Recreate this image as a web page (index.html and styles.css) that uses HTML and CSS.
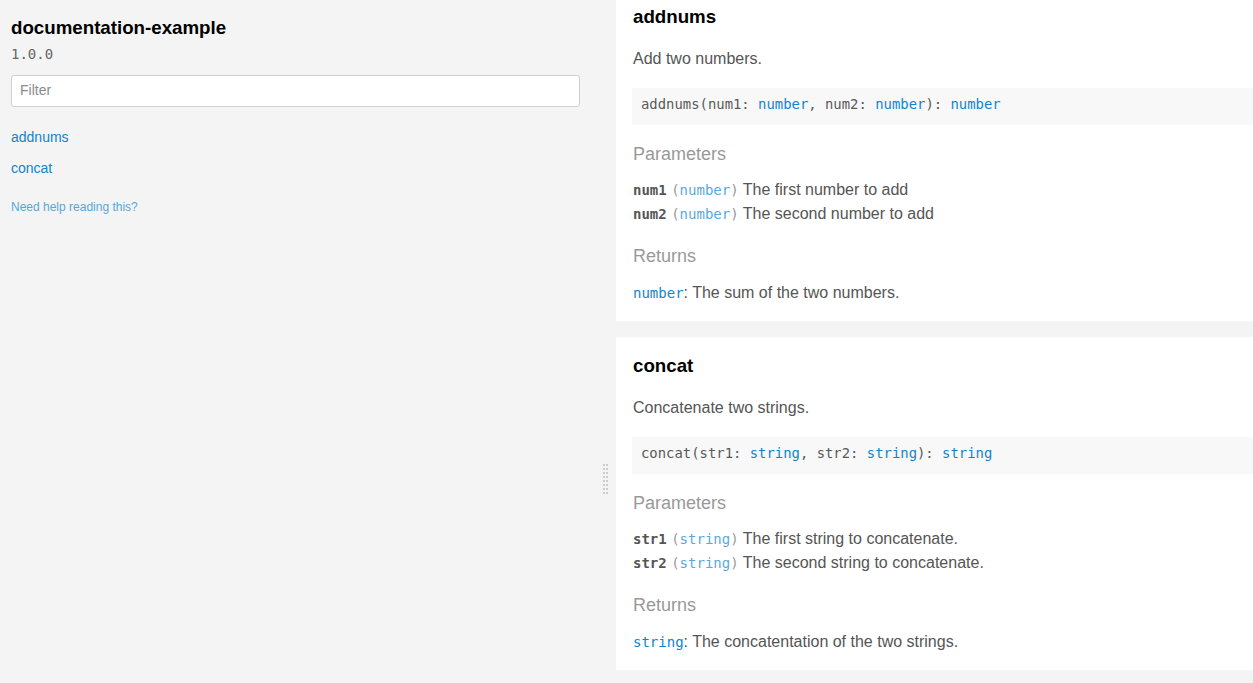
FILE: index.html
```html
<!DOCTYPE html>
<html>
<head>
<meta charset="utf-8">
<title>documentation-example 1.0.0</title>
<link rel="stylesheet" href="styles.css">
</head>
<body>
<div class="layout">
  <aside class="sidebar">
    <h3 class="project-name">documentation-example</h3>
    <div class="version">1.0.0</div>
    <input class="filter" type="text" placeholder="Filter">
    <nav class="toc">
      <a class="toc-link" href="#addnums">addnums</a>
      <a class="toc-link" href="#concat">concat</a>
    </nav>
    <a class="help" href="#">Need help reading this?</a>
  </aside>
  <div class="gutter">
    <svg class="grip" width="5" height="30" viewBox="0 0 5 30">
      <defs>
        <pattern id="dots" width="3" height="4" patternUnits="userSpaceOnUse">
          <rect x="0" y="0" width="2" height="2" fill="#cccccc"/>
        </pattern>
      </defs>
      <rect x="0" y="0" width="5" height="30" fill="url(#dots)"/>
    </svg>
  </div>
  <main class="content">
    <section class="card" id="addnums">
      <h3 class="card-title">addnums</h3>
      <p class="desc">Add two numbers.</p>
      <div class="signature">addnums(num1: <span class="type">number</span>, num2: <span class="type">number</span>): <span class="type">number</span></div>
      <div class="section-label">Parameters</div>
      <div class="params">
        <div class="param"><span class="pname">num1</span> <code class="ptype">(<span class="ptype-name">number</span>)</code> The first number to add</div>
        <div class="param"><span class="pname">num2</span> <code class="ptype">(<span class="ptype-name">number</span>)</code> The second number to add</div>
      </div>
      <div class="section-label returns-label">Returns</div>
      <div class="returns"><code class="rtype">number</code>: The sum of the two numbers.</div>
    </section>
    <section class="card" id="concat">
      <h3 class="card-title">concat</h3>
      <p class="desc">Concatenate two strings.</p>
      <div class="signature">concat(str1: <span class="type">string</span>, str2: <span class="type">string</span>): <span class="type">string</span></div>
      <div class="section-label">Parameters</div>
      <div class="params">
        <div class="param"><span class="pname">str1</span> <code class="ptype">(<span class="ptype-name">string</span>)</code> The first string to concatenate.</div>
        <div class="param"><span class="pname">str2</span> <code class="ptype">(<span class="ptype-name">string</span>)</code> The second string to concatenate.</div>
      </div>
      <div class="section-label returns-label">Returns</div>
      <div class="returns"><code class="rtype">string</code>: The concatentation of the two strings.</div>
    </section>
  </main>
</div>
</body>
</html>
```
FILE: styles.css
```css
html, body {
  margin: 0;
  padding: 0;
  background: #f4f4f4;
  font-family: "Liberation Sans", Arial, sans-serif;
  color: #555555;
  height: 100%;
  overflow: hidden;
}

.layout {
  display: flex;
  align-items: flex-start;
}

/* Sidebar */
.sidebar {
  width: 569px;
  flex: none;
  padding: 16px 20px 0 11px;
  display: flex;
  flex-direction: column;
  align-items: flex-start;
}

.project-name {
  margin: 0;
  font-size: 18.72px;
  line-height: 24px;
  font-weight: bold;
  color: #000;
}

.version {
  margin-top: 4px;
  font-family: "DejaVu Sans Mono", monospace;
  font-size: 14px;
  line-height: 20px;
  color: #666;
}

.filter {
  box-sizing: border-box;
  margin: 11px 0 0 0;
  width: 569px;
  height: 32px;
  padding: 0 8px 2px 8px;
  border: 1px solid #cfcfcf;
  border-radius: 3px;
  background: #fff;
  font-family: "Liberation Sans", Arial, sans-serif;
  font-size: 14px;
  color: #333;
  outline: none;
}

.filter::placeholder {
  color: #8a8a8a;
}

.toc {
  margin-top: 20px;
  display: flex;
  flex-direction: column;
  gap: 11px;
}

.toc-link {
  font-size: 14px;
  line-height: 20px;
  color: #1184ce;
  text-decoration: none;
}

.help {
  margin-top: 21px;
  font-size: 12px;
  line-height: 16px;
  color: #1184ce;
  opacity: 0.7;
  text-decoration: none;
}

/* Gutter with resize grip */
.gutter {
  width: 16px;
  flex: none;
  padding-top: 464px;
}

.grip {
  display: block;
  margin-left: 3px;
}

/* Content */
.content {
  flex: 1;
  margin-top: -12px;
  display: flex;
  flex-direction: column;
  gap: 16px;
}

.card {
  background: #fff;
  padding: 17px 0 16px 16px;
}

.card-title {
  margin: 0;
  padding-left: 1px;
  font-size: 18.72px;
  line-height: 24px;
  font-weight: bold;
  color: #000;
}

.desc {
  margin: 18px 0 0 1px;
  font-size: 16px;
  line-height: 24px;
}

.signature {
  margin-top: 17px;
  background: #f8f8f8;
  padding: 6px 9px 10px 9px;
  font-family: "DejaVu Sans Mono", monospace;
  font-size: 13.9px;
  line-height: 21px;
  color: #5a5a5a;
  white-space: pre;
}

.type {
  color: #1184ce;
}

.section-label {
  margin: 17px 0 0 1px;
  font-size: 18px;
  line-height: 24px;
  color: #555;
  opacity: 0.6;
}

.returns-label {
  margin-top: 18px;
}

.params {
  margin: 12px 0 0 1px;
}

.param {
  font-size: 16px;
  line-height: 24px;
}

.pname {
  font-family: "DejaVu Sans Mono", monospace;
  font-size: 14px;
  font-weight: bold;
  line-height: 1;
}

.ptype {
  font-family: "DejaVu Sans Mono", monospace;
  font-size: 14px;
  line-height: 1;
  color: #999;
}

.ptype-name {
  color: #1184ce;
  opacity: 0.7;
}

.returns {
  margin: 13px 0 0 1px;
  font-size: 16px;
  line-height: 24px;
}

.rtype {
  font-family: "DejaVu Sans Mono", monospace;
  font-size: 14px;
  line-height: 1;
  color: #1184ce;
}
```
